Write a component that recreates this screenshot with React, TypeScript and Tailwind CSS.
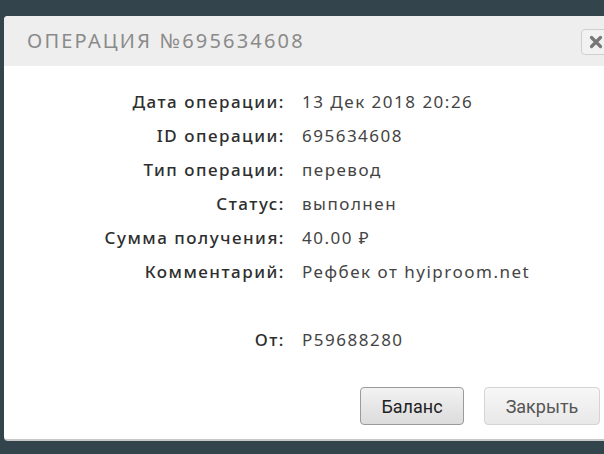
import React from "react";

const rows: [string, string][] = [
  ["Дата операции:", "13 Дек 2018 20:26"],
  ["ID операции:", "695634608"],
  ["Тип операции:", "перевод"],
  ["Статус:", "выполнен"],
  ["Сумма получения:", "40.00 ₽"],
  ["Комментарий:", "Рефбек от hyiproom.net"],
];

export default function App() {
  return (
    <div className="w-[604px] h-[454px] bg-[#34444c] overflow-hidden pt-[16px] pl-[4px]">
      <div className="w-[620px] h-[425px] bg-white rounded-[4px] border-b-2 border-[#c8c8c8] overflow-hidden flex flex-col">
        <div className="h-[50px] bg-[#eeeeee] flex items-center justify-between pl-[23px]">
          <div
            className="text-[20px] tracking-[2.2px] text-[#8a8a8a]"
            style={{ fontFamily: "'Noto Sans', 'DejaVu Sans', sans-serif" }}
          >
            ОПЕРАЦИЯ №695634608
          </div>
          <div className="mr-[13px] mt-[2px] w-[30px] h-[26px] border border-[#cfcfcf] rounded-[4px] bg-[#f2f2f2] flex items-center justify-center">
            <svg width="14" height="14" viewBox="0 0 14 14">
              <path d="M2.5 2.5 L11.5 11.5 M11.5 2.5 L2.5 11.5" stroke="#777" strokeWidth="3.2" strokeLinecap="round" />
            </svg>
          </div>
        </div>
        <div
          className="flex-1 flex flex-col pt-[19px] tracking-[1.5px]"
          style={{ fontFamily: "'Noto Sans', 'DejaVu Sans', sans-serif" }}
        >
          {rows.map(([l, v]) => (
            <div key={l} className="flex h-[34px] items-center text-[17px]">
              <div className="w-[281px] text-right font-medium text-[#2e2e2e]">{l}</div>
              <div className="ml-[17px] text-[#444]">{v}</div>
            </div>
          ))}
          <div className="h-[34px]" />
          <div className="flex h-[34px] items-center text-[17px]">
            <div className="w-[281px] text-right font-medium text-[#2e2e2e]">От:</div>
            <div className="ml-[17px] text-[#444]">P59688280</div>
          </div>
          <div
            className="flex gap-[20px] pl-[356px] mt-[30px] tracking-normal"
            style={{ fontFamily: "Roboto, 'Liberation Sans', sans-serif" }}
          >
            <button className="w-[104px] h-[38px] rounded-[4px] border border-[#9a9a9a] bg-gradient-to-b from-[#f2f2f2] to-[#dcdcdc] text-[18px] font-normal text-[#222]">
              Баланс
            </button>
            <button className="w-[116px] h-[38px] rounded-[4px] border border-[#d4d4d4] bg-gradient-to-b from-[#f7f7f7] to-[#e8e8e8] text-[18px] font-normal text-[#555]">
              Закрыть
            </button>
          </div>
        </div>
      </div>
    </div>
  );
}
